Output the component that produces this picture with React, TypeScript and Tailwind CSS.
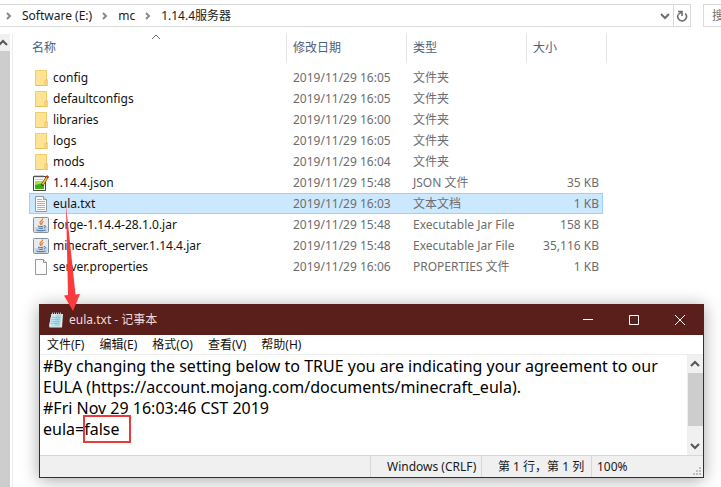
import React from "react";

type Kind = "folder" | "json" | "txt" | "jar" | "file";

interface Entry {
  name: string;
  date: string;
  type: string;
  size: string;
  kind: Kind;
  selected?: boolean;
}

const entries: Entry[] = [
  { name: "config", date: "2019/11/29 16:05", type: "文件夹", size: "", kind: "folder" },
  { name: "defaultconfigs", date: "2019/11/29 16:05", type: "文件夹", size: "", kind: "folder" },
  { name: "libraries", date: "2019/11/29 16:00", type: "文件夹", size: "", kind: "folder" },
  { name: "logs", date: "2019/11/29 16:05", type: "文件夹", size: "", kind: "folder" },
  { name: "mods", date: "2019/11/29 16:04", type: "文件夹", size: "", kind: "folder" },
  { name: "1.14.4.json", date: "2019/11/29 15:48", type: "JSON 文件", size: "35 KB", kind: "json" },
  { name: "eula.txt", date: "2019/11/29 16:03", type: "文本文档", size: "1 KB", kind: "txt", selected: true },
  { name: "forge-1.14.4-28.1.0.jar", date: "2019/11/29 15:48", type: "Executable Jar File", size: "158 KB", kind: "jar" },
  { name: "minecraft_server.1.14.4.jar", date: "2019/11/29 15:48", type: "Executable Jar File", size: "35,116 KB", kind: "jar" },
  { name: "server.properties", date: "2019/11/29 16:06", type: "PROPERTIES 文件", size: "1 KB", kind: "file" },
];

const menus = ["文件(F)", "编辑(E)", "格式(O)", "查看(V)", "帮助(H)"];

const eulaText = `#By changing the setting below to TRUE you are indicating your agreement to our EULA (https://account.mojang.com/documents/minecraft_eula).
#Fri Nov 29 16:03:46 CST 2019
eula=false`;

function FileIcon({ kind }: { kind: Kind }) {
  return (
    <svg viewBox="0 0 16 16" className="h-4 w-4 shrink-0" aria-hidden="true">
      {kind === "folder" && (
        <>
          <path d="M2 0h12v9l1 1v6H2z" fill="#ffe394" />
          <path d="M2.500 15.500V0.500h11v9" fill="none" stroke="#f0cd6c" />
          <path d="M2.500 15.500h9M12 15.500v-5l2-1v6z" fill="#ffe9a8" stroke="#e9bf55" />
        </>
      )}
      {kind === "json" && (
        <>
          <path d="M0.500 1.500h12v14h-12z" fill="#fff" stroke="#444" />
          <path d="M2 6h9v8H2z" fill="#a6e05a" />
          <path d="M2 10l9-2v6H2z" fill="#3fae12" />
          <path d="M2 0v2.500M4 0v2.500M6 0v2.500M8 0v2.500M10 0v2.500" stroke="#777" strokeWidth="0.800" />
          <path d="M2 4.500h8" stroke="#c5d2de" />
          <path d="M14.500 1.500L9 10.500" stroke="#3a3320" strokeWidth="2.800" />
          <path d="M14 2.500L9.500 9.500" stroke="#f5c518" strokeWidth="1.800" />
          <path d="M14 0l2 1.500-1 1.500-2-1.500z" fill="#c33" />
        </>
      )}
      {(kind === "txt" || kind === "file") && (
        <>
          <path d="M2.500 0.500h8l3 3v12h-11z" fill="#fbfbfb" stroke="#999" />
          <path d="M10.500 0.500v3h3" fill="#e4e4e4" stroke="#999" />
          {kind === "txt" && (
            <path d="M4 3.500h5M4 5.500h8M4 7.500h8M4 9.500h8M4 11.500h8M4 13.500h8" stroke="#b0b0b0" />
          )}
        </>
      )}
      {kind === "jar" && (
        <>
          <rect x="0.500" y="0.500" width="15" height="15" rx="1" fill="#e6ebf0" stroke="#7f91a3" />
          <path d="M1.500 10h13v5h-13z" fill="#cbd5df" />
          <path d="M9.500 1.500c1 2-3.500 3-2.500 4.500.3.700 1 1 .8 2M10.500 4.500c-1.500.8-2.200 1.500-1.300 3" fill="none" stroke="#e8762c" strokeWidth="1.200" />
          <path d="M5 9c1.500.7 4 .7 5.500 0M5.500 11c1.500.6 3.300.6 4.500 0M3.500 13c2.500 1 6.500 1 9 0M11 8.800c2.200-.5 2.200 1.600 0 2.200" fill="none" stroke="#3f6c96" />
        </>
      )}
    </svg>
  );
}

function Chevron({ dir, className }: { dir: "up" | "down" | "right"; className: string }) {
  const d = { up: "M1 7l4-4 4 4", down: "M1 3l4 4 4-4", right: "M3 2l3 3-3 3" }[dir];
  return (
    <svg viewBox="0 0 10 10" className={className} fill="none" stroke="currentColor" aria-hidden="true">
      <path d={d} />
    </svg>
  );
}

function AddressBar() {
  return (
    <header className="flex h-[27px] shrink-0 pt-1">
      <nav className="flex min-w-0 flex-1 items-center gap-2 border-y border-[#d9d9d9] pl-1 text-[#1a1a1a]">
        <Chevron dir="right" className="h-2.5 w-2.5 stroke-2 text-[#8a8a8a]" />
        <a href="#e">Software (E:)</a>
        <Chevron dir="right" className="h-2.5 w-2.5 stroke-2 text-[#8a8a8a]" />
        <a href="#mc">mc</a>
        <Chevron dir="right" className="h-2.5 w-2.5 stroke-2 text-[#8a8a8a]" />
        <a href="#server">1.14.4服务器</a>
        <button aria-label="历史记录" className="ml-auto flex h-full w-4 items-center justify-center text-[#6e6e6e]">
          <Chevron dir="down" className="h-2.5 w-2.5 stroke-2" />
        </button>
      </nav>
      <button aria-label="刷新" className="flex w-[18px] items-center justify-center border border-[#d9d9d9] text-[#6e6e6e]">
        <svg viewBox="0 0 12 12" className="h-3 w-3" fill="none" stroke="currentColor" strokeWidth="1.600" aria-hidden="true">
          <path d="M9.200 3.500A4.300 4.300 0 1 1 2.300 4.500" />
          <path d="M2 1.500h4v4.500" />
          <path d="M2.300 4.500L5.500 1.800" />
        </svg>
      </button>
      <input
        aria-label="搜索"
        placeholder="搜索"
        className="ml-3 w-[18px] min-w-0 border border-r-0 border-[#d9d9d9] pl-2 outline-none placeholder:text-[#6e6e6e]"
      />
    </header>
  );
}

function FileTable() {
  return (
    <table className="w-[578px] table-fixed border-separate border-spacing-0 text-[#6d6d6d]">
      <colgroup>
        <col className="w-[258px]" />
        <col className="w-[120px]" />
        <col className="w-[120px]" />
        <col className="w-[76px]" />
        <col className="w-1" />
      </colgroup>
      <thead>
        <tr className="h-7 text-left text-[#4c607a]">
          <th className="relative border-r border-[#e5e5e5] pl-[3px] font-normal">
            名称
            <Chevron dir="up" className="absolute top-[-2px] left-[122px] h-2.5 w-2.5 text-[#6e6e6e]" />
          </th>
          <th className="border-r border-[#e5e5e5] pl-1.5 font-normal">修改日期</th>
          <th className="border-r border-[#e5e5e5] pl-1.5 font-normal">类型</th>
          <th className="pl-1.5 font-normal">大小</th>
          <th className="border-r border-[#e5e5e5]" />
        </tr>
      </thead>
      <tbody>
        <tr className="h-[5px]" />
        {entries.map((e) => {
          const edge = e.selected ? "border-y border-[#99d1ff] bg-[#cce8ff]" : "border-y border-transparent";
          return (
            <tr key={e.name} className="h-[21px] leading-4">
              <td className={`${edge} p-0 ${e.selected ? "border-l" : "pl-px"}`}>
                <div className="flex h-[19px] items-center gap-1 pl-[3px] text-[#111]">
                  <FileIcon kind={e.kind} />
                  <span>{e.name}</span>
                </div>
              </td>
              <td className={`${edge} p-0 pl-1.5`}>{e.date}</td>
              <td className={`${edge} p-0 pl-1.5 whitespace-nowrap`}>{e.type}</td>
              <td className={`${edge} p-0 text-right ${e.selected ? "border-r pr-[3px]" : "pr-1"}`}>{e.size}</td>
              <td className="p-0" />
            </tr>
          );
        })}
      </tbody>
    </table>
  );
}

function Notepad() {
  return (
    <section className="absolute top-[304px] right-[17px] left-[39px] border border-[#5a1f1b] bg-white shadow-[0_2px_16px_rgba(0,0,0,0.35)]">
      <div className="flex h-[30px] items-center bg-[#5a1f1b] pl-2 text-[#f0dcdc]">
        <svg viewBox="0 0 16 16" className="mr-[5px] h-4 w-4" aria-hidden="true">
          <path d="M3.500 2h11.500l-1 13.500H1.500z" fill="#e4ebe9" />
          <path d="M3.500 2h10l-1.500 12.500H1z" fill="#a9dbe6" />
          <path d="M3.500 2h5L6 14.500H1z" fill="#c3e8ef" />
          <path d="M4 5.500h8M3.700 7.500h8M3.400 9.500h8M3 11.500h8" stroke="#7fb9c8" strokeWidth="0.700" />
          <path d="M4.500 0.500v2.500M6.500 0.500v2.500M8.500 0.500v2.500M10.500 0.500v2.500M12.500 0.500v2.500" stroke="#d8e8ea" strokeWidth="0.800" />
        </svg>
        <h1 className="flex-1">eula.txt - 记事本</h1>
        <div className="flex h-full text-white">
          <button aria-label="最小化" className="flex w-[46px] items-center justify-center">
            <svg viewBox="0 0 10 10" className="h-2.5 w-2.5" stroke="currentColor"><path d="M0 4.500h10" /></svg>
          </button>
          <button aria-label="最大化" className="flex w-[46px] items-center justify-center">
            <svg viewBox="0 0 10 10" className="h-2.5 w-2.5" fill="none" stroke="currentColor"><path d="M0.500 0.500h9v9h-9z" /></svg>
          </button>
          <button aria-label="关闭" className="flex w-[46px] items-center justify-center">
            <svg viewBox="0 0 10 10" className="h-2.5 w-2.5" stroke="currentColor"><path d="M0 0l10 10M10 0L0 10" /></svg>
          </button>
        </div>
      </div>
      <div className="flex h-5 items-center gap-[15px] border-b border-[#ececec] pl-[7px] text-[#111]">
        {menus.map((m) => (
          <button key={m}>{m}</button>
        ))}
      </div>
      <div className="flex h-[100px]">
        <div className="relative min-w-0 flex-1">
          <textarea
            aria-label="文本编辑器"
            defaultValue={eulaText}
            spellCheck={false}
            className="block h-full w-full resize-none overflow-hidden pt-px pl-[3px] text-base leading-[21px] text-black outline-none"
          />
          <div className="absolute top-[60px] left-[43px] h-7 w-12 border-2 border-[#e8393d]" />
        </div>
        <div className="flex w-4 flex-col items-center bg-[#f0f0f0] text-[#555]">
          <Chevron dir="up" className="my-1 h-2.5 w-2.5 stroke-2" />
          <div className="h-[53px] w-[15px] bg-[#cdcdcd]" />
          <Chevron dir="down" className="mt-auto mb-1 h-2.5 w-2.5 stroke-2" />
        </div>
      </div>
      <footer className="flex h-[22px] border-t border-[#d7d7d7] bg-[#f0f0f0] leading-[21px] whitespace-nowrap text-[#1a1a1a]">
        <div className="flex-1 border-r border-[#d7d7d7]" />
        <div className="w-[111px] border-r border-[#d7d7d7] pl-4">Windows (CRLF)</div>
        <div className="w-[110px] border-r border-[#d7d7d7] pl-4">第 1 行，第 1 列</div>
        <div className="relative w-[111px] pl-[5px]">
          100%
          <svg viewBox="0 0 8 8" className="absolute right-0.5 bottom-0.5 h-2 w-2" fill="#bdbdbd" aria-hidden="true">
            <path d="M6 0h2v2H6zM3 3h2v2H3zM6 3h2v2H6zM0 6h2v2H0zM3 6h2v2H3zM6 6h2v2H6z" />
          </svg>
        </div>
      </footer>
    </section>
  );
}

export default function App() {
  return (
    <main className="relative flex h-screen flex-col overflow-hidden bg-white font-['Noto_Sans','Noto_Sans_CJK_SC',sans-serif] text-xs">
      <AddressBar />
      <div className="flex min-h-0 flex-1 pt-[7px]">
        <div className="mr-0.5 flex w-2.5 flex-col bg-[#cdcdcd]">
          <div className="flex h-[17px] items-center bg-[#f0f0f0] text-[#555]">
            <Chevron dir="up" className="-ml-0.5 h-2.5 w-2.5 stroke-2" />
          </div>
        </div>
        <div className="flex-1 border-l border-[#ececec] pl-4">
          <FileTable />
        </div>
      </div>
      <Notepad />
      <svg viewBox="0 0 16 106" className="absolute top-[205px] left-16 h-[106px] w-4" aria-hidden="true">
        <path d="M2 0L11.500 89.500 16 89 9 106 0 90.500 4 90z" fill="#fb3a3e" />
      </svg>
    </main>
  );
}
